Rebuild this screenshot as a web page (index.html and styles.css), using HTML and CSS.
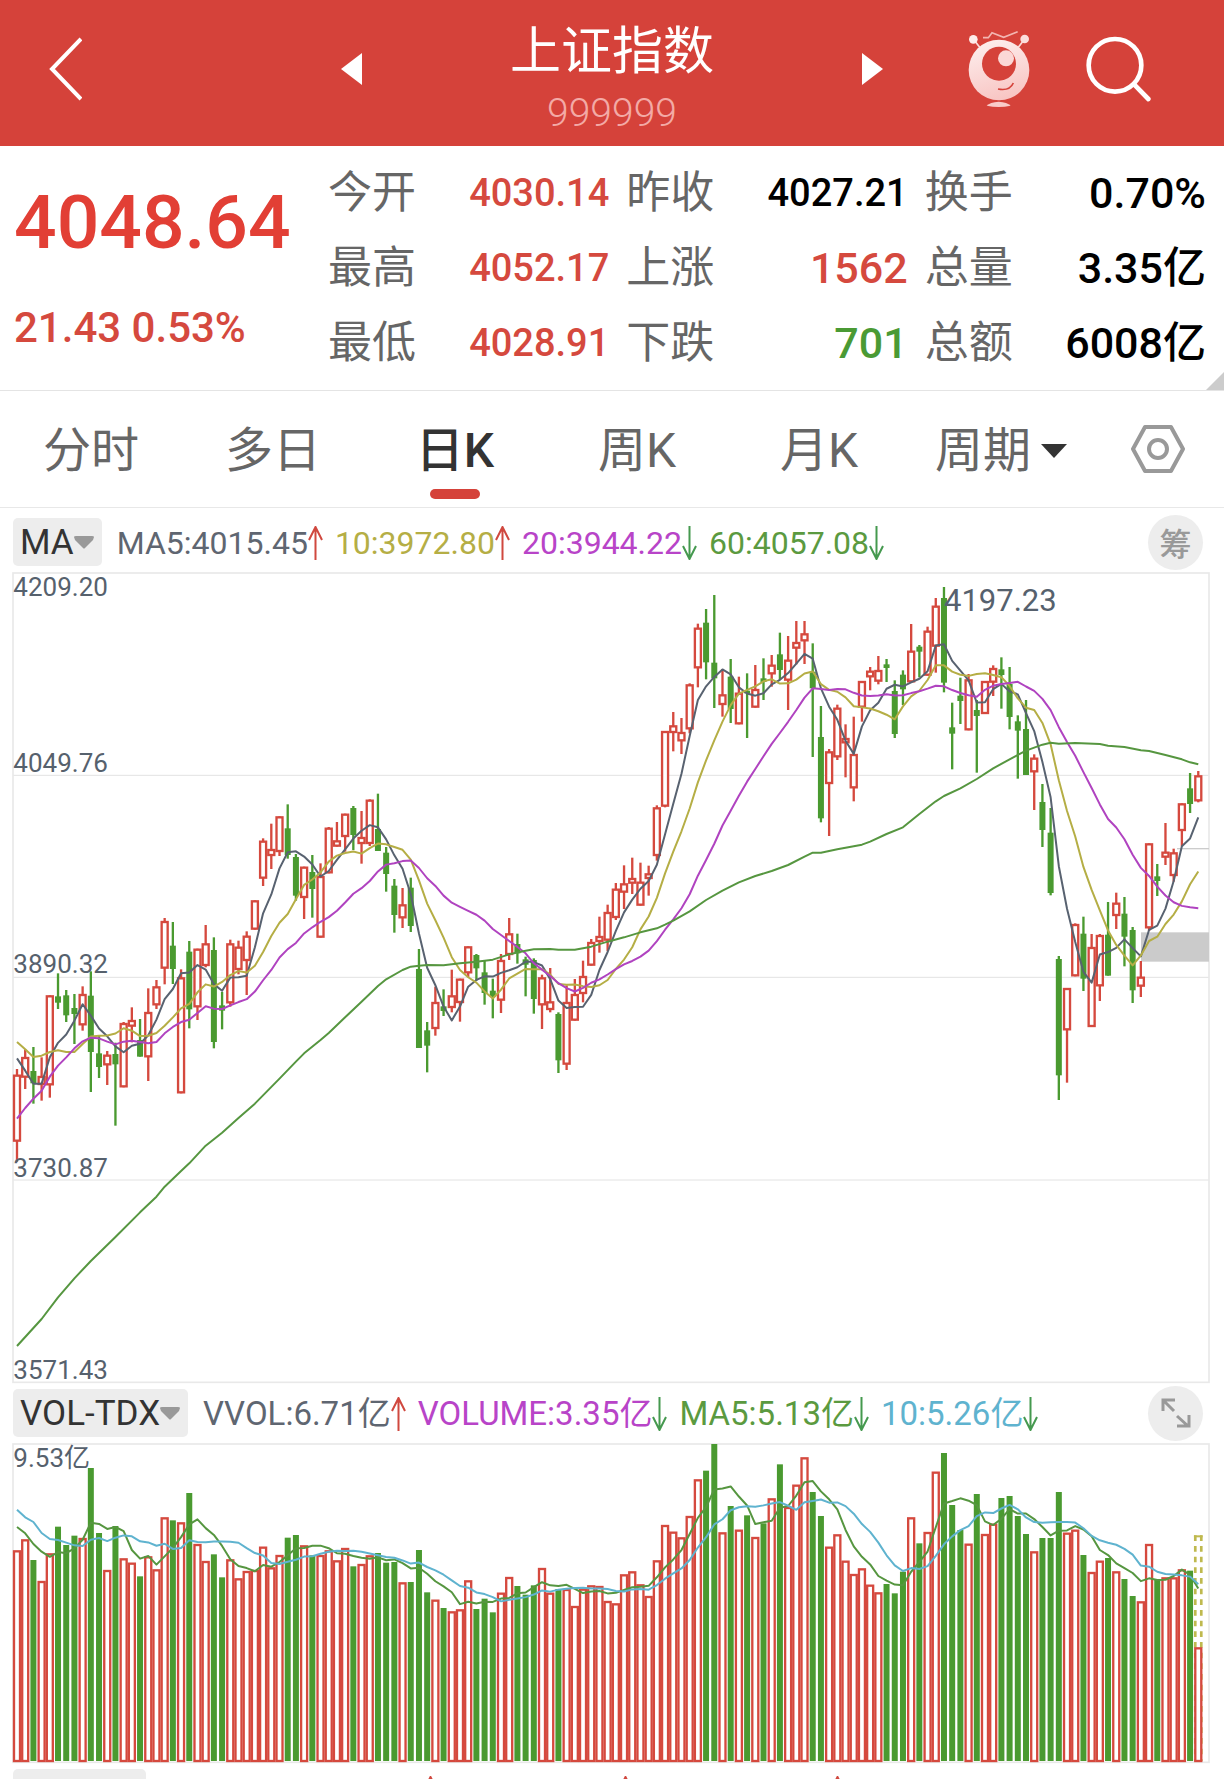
FILE: index.html
```html
<!DOCTYPE html>
<html lang="zh-CN">
<head>
	<meta charset="UTF-8">
	<meta name="viewport" content="width=device-width,initial-scale=1.0">
	<title>上证指数</title>
	<link rel="stylesheet" href="styles.css">
</head>
<body>

	<header class="header">
		<button class="icon_btn back" aria-label="返回">
			<svg width="34" height="64" viewBox="0 0 34 64"><path d="M33 2L4 32L33 62" fill="none" stroke="#fff" stroke-width="4"/></svg>
		</button>
		<div class="switcher">
			<button class="icon_btn" aria-label="上一个">
				<svg width="21" height="32" viewBox="0 0 21 32"><path d="M0 16L21 0V32z" fill="#fff"/></svg>
			</button>
			<div class="title_box">
				<h1 class="title">上证指数</h1>
				<p class="code">999999</p>
			</div>
			<button class="icon_btn" aria-label="下一个">
				<svg width="21" height="32" viewBox="0 0 21 32"><path d="M21 16L0 0V32z" fill="#fff"/></svg>
			</button>
		</div>
		<div class="header_right">
			<button class="icon_btn" aria-label="助手">
				<svg width="62" height="78" viewBox="84 60 186 234">
					<defs>
						<linearGradient id="robot" x1="0.3" y1="0" x2="0.6" y2="1">
							<stop offset="0" stop-color="#fdeeed"/>
							<stop offset="1" stop-color="#f8c4c2"/>
						</linearGradient>
					</defs>
					<path d="M104 92L119 112M250 92L235 112" stroke="#fbdcda" stroke-width="5"/>
					<circle cx="100" cy="88" r="13" fill="#fdecea"/>
					<circle cx="254" cy="87" r="13" fill="#fbdedc"/>
					<path d="M129 83H145L156 68L191 82L233 65" fill="none" stroke="#f3b5b1" stroke-width="5"/>
					<circle cx="177" cy="180" r="91" fill="url(#robot)"/>
					<circle cx="177" cy="161" r="51" fill="#d5423a"/>
					<circle cx="198" cy="145" r="24" fill="#fbd8d6"/>
					<path d="M174 237Q209 244 220 219" fill="none" stroke="#d5423a" stroke-width="5"/>
					<path d="M140 287Q150 276 176 275Q202 276 212 287Q176 295 140 287z" fill="#f9cbc9"/>
				</svg>
			</button>
			<button class="icon_btn" aria-label="搜索">
				<svg width="66" height="66" viewBox="440 78 198 198" fill="none" stroke="#fff" stroke-linecap="round">
					<circle cx="527" cy="166" r="79" stroke-width="14"/>
					<path d="M585 224L627 267" stroke-width="14"/>
				</svg>
			</button>
		</div>
	</header>

	<section class="quote">
		<div class="quote_main">
			<p class="price">4048.64</p>
			<p class="change">21.43 0.53%</p>
		</div>
		<dl class="quote_list">
			<div class="cell"><dt>今开</dt><dd class="num red">4030.14</dd></div>
			<div class="cell"><dt>昨收</dt><dd class="num">4027.21</dd></div>
			<div class="cell"><dt>换手</dt><dd>0.70%</dd></div>
			<div class="cell"><dt>最高</dt><dd class="num red">4052.17</dd></div>
			<div class="cell"><dt>上涨</dt><dd class="red">1562</dd></div>
			<div class="cell"><dt>总量</dt><dd>3.35亿</dd></div>
			<div class="cell"><dt>最低</dt><dd class="num red">4028.91</dd></div>
			<div class="cell"><dt>下跌</dt><dd class="green">701</dd></div>
			<div class="cell"><dt>总额</dt><dd>6008亿</dd></div>
		</dl>
		<span class="corner"></span>
	</section>

	<nav class="tabs">
		<button class="tab">分时</button>
		<button class="tab">多日</button>
		<button class="tab active">日K</button>
		<button class="tab">周K</button>
		<button class="tab">月K</button>
		<button class="tab">周期<svg width="26" height="14" viewBox="0 0 26 14"><path d="M0 0H26L13 14z" fill="#333"/></svg></button>
		<button class="tab tab_icon" aria-label="设置">
			<svg width="54" height="50" viewBox="0 0 54 50" fill="none" stroke="#999" stroke-width="4" stroke-linejoin="round">
				<path d="M14 3H40L52 25L40 47H14L2 25z"/>
				<circle cx="27" cy="25" r="9"/>
			</svg>
		</button>
	</nav>

	<div class="bar bar_ma">
		<button class="pick">MA<svg width="20" height="13" viewBox="0 0 20 13"><path d="M0 1Q0 0 2 0H18Q20 0 20 1L19 4L11 12Q10 13 9 12L1 4z" fill="#999"/></svg></button>
		<ul class="values">
			<li class="c_dark">MA5:4015.45<svg class="arrow"><use href="#up"/></svg></li>
			<li class="c_yellow">10:3972.80<svg class="arrow"><use href="#up"/></svg></li>
			<li class="c_purple">20:3944.22<svg class="arrow"><use href="#down"/></svg></li>
			<li class="c_green">60:4057.08<svg class="arrow"><use href="#down"/></svg></li>
		</ul>
		<button class="round">筹</button>
	</div>

	<svg class="chart" id="kline" viewBox="0 6 3594 2433" role="img" aria-label="日K线"></svg>

	<div class="bar bar_vol">
		<button class="pick">VOL-TDX<svg width="20" height="13" viewBox="0 0 20 13"><path d="M0 1Q0 0 2 0H18Q20 0 20 1L19 4L11 12Q10 13 9 12L1 4z" fill="#999"/></svg></button>
		<ul class="values">
			<li class="c_dark">VVOL:6.71亿<svg class="arrow"><use href="#up"/></svg></li>
			<li class="c_purple">VOLUME:3.35亿<svg class="arrow"><use href="#down"/></svg></li>
			<li class="c_green">MA5:5.13亿<svg class="arrow"><use href="#down"/></svg></li>
			<li class="c_blue">10:5.26亿<svg class="arrow"><use href="#down"/></svg></li>
		</ul>
		<button class="round" aria-label="全屏">
			<svg width="30" height="30" viewBox="0 0 30 30" fill="none" stroke="#999" stroke-width="3"><path d="M2 13V2H14M2 2L13 13M16 18L27 28M28 17V28H16"/></svg>
		</button>
	</div>

	<svg class="chart" id="volume" viewBox="0 219 3594 960" role="img" aria-label="成交量"></svg>

	<div class="bar_next">
		<button class="pick" aria-label="指标"></button>
		<svg class="arrow"><use href="#up"/></svg>
		<svg class="arrow"><use href="#up"/></svg>
		<svg class="arrow"><use href="#up"/></svg>
	</div>

	<svg class="symbols">
		<symbol id="up" viewBox="0 0 15 34"><path d="M7.500 1V34M1 14L7.500 1L14 14" fill="none" stroke="#d0483f" stroke-width="2"/></symbol>
		<symbol id="down" viewBox="0 0 15 34"><path d="M7.500 0V33M1 20L7.500 33L14 20" fill="none" stroke="#45994f" stroke-width="2"/></symbol>
	</svg>

	<script src="chart.js"></script>
</body>
</html>
```

FILE: styles.css
```css
* {
	box-sizing: border-box;
}
body {
	margin: 0;
	background: #fff;
	color: #000;
	font-family: Roboto, "Noto Sans CJK SC", sans-serif;
}
h1, p, ul, dl, dd {
	margin: 0;
	padding: 0;
}
button {
	margin: 0;
	padding: 0;
	border: 0;
	background: none;
	font: inherit;
	color: inherit;
}
svg {
	display: block;
	flex: none;
}
.symbols {
	display: none;
}
.red {
	color: #d5493e;
}
.green {
	color: #4a9a34;
}

/* 顶部 */
.header {
	display: grid;
	grid-template-columns: 1fr 542px 1fr;
	height: 146px;
	padding-top: 19px;
	background: #d5423a;
	color: #fff;
}
.icon_btn {
	display: flex;
	align-items: center;
	height: 100px;
}
.back {
	padding-left: 48px;
}
.switcher {
	display: flex;
	justify-content: space-between;
}
.title_box {
	text-align: center;
}
.title {
	font-size: 51px;
	font-weight: 400;
	line-height: 66px;
}
.code {
	color: #f3aaa6;
	font-size: 39px;
	font-weight: 300;
	line-height: 56px;
}
.header_right {
	display: flex;
	justify-content: flex-end;
	gap: 56px;
	padding-right: 72px;
}

/* 行情 */
.quote {
	position: relative;
	display: flex;
	padding: 10px 18px 9px 14px;
	border-bottom: 1px solid #e4e4e4;
}
.quote_main {
	flex: none;
	width: 314px;
	padding-top: 28px;
	color: #d5493e;
}
.price {
	color: #e23f35;
	font-size: 75px;
	font-weight: 500;
	line-height: 76px;
}
.change {
	margin-top: 47px;
	font-size: 42px;
	line-height: 42px;
}
.quote_list {
	flex: 1;
	display: grid;
	grid-template-columns: repeat(3, 1fr);
	column-gap: 17px;
}
.cell {
	display: flex;
	justify-content: space-between;
	font-size: 44px;
	line-height: 75px;
}
.cell dt {
	color: #666;
}
.cell dd {
	font-size: 43px;
}
.cell .num {
	font-size: 38px;
}
.cell dd, .change {
	font-weight: 500;
}
.corner {
	position: absolute;
	right: 0;
	bottom: 0;
	border-left: 18px solid transparent;
	border-bottom: 18px solid #ccc;
}

/* 周期切换 */
.tabs {
	display: grid;
	grid-template-columns: repeat(6, 1fr) 132px;
	height: 117px;
	border-bottom: 1px solid #e8e8e8;
}
.tab {
	position: relative;
	display: flex;
	align-items: center;
	justify-content: center;
	gap: 10px;
	padding-top: 3px;
	color: #666;
	font-size: 48px;
	line-height: 112px;
}
.tab_icon {
	padding-top: 0;
}
.tab.active {
	color: #333;
	font-weight: 500;
}
.tab.active::after {
	content: "";
	position: absolute;
	bottom: 8px;
	width: 50px;
	height: 10px;
	border-radius: 5px;
	background: #d5423a;
}

/* 指标栏 */
.bar {
	display: flex;
	align-items: center;
	padding: 0 21px 0 13px;
	font-size: 33px;
}
.bar_ma {
	height: 64px;
	padding-top: 4px;
	font-size: 32px;
}
.bar_vol {
	height: 60px;
}
.pick {
	display: flex;
	align-items: center;
	height: 48px;
	padding: 0 8px 0 7px;
	border-radius: 5px;
	background: #ededed;
	color: #333;
	font-size: 35px;
}
.values {
	flex: 1;
	display: flex;
	gap: 12px;
	margin-left: 15px;
	list-style: none;
}
.values li {
	display: flex;
	align-items: center;
	padding-top: 2px;
	line-height: 48px;
	white-space: nowrap;
}
.arrow {
	width: 15px;
	height: 34px;
}
.round {
	display: flex;
	align-items: center;
	justify-content: center;
	width: 55px;
	height: 55px;
	border-radius: 50%;
	background: #ededed;
	color: #999;
	font-size: 32px;
	font-weight: 500;
}
.c_dark {
	color: #5f6671;
}
.c_yellow {
	color: #b5ae45;
}
.c_purple {
	color: #b844c8;
}
.c_green {
	color: #5b9a40;
}
.c_blue {
	color: #5fb3cf;
}
.bar_next {
	display: grid;
	grid-template-columns: 133px 292px 195px 212px;
	justify-items: end;
	height: 16px;
	padding: 6px 13px 0;
	overflow: hidden;
}
.bar_next .pick {
	width: 100%;
}
.bar_next .arrow {
	margin-top: 7px;
}

/* 图表 */
.chart {
	width: calc(100% - 26px);
	height: auto;
	margin: 0 14px 0 12px;
	overflow: visible;
}
.frame {
	fill: none;
	stroke: #e9e9e9;
	stroke-width: 5;
}
.grid {
	stroke: #e2e2e2;
	stroke-width: 3;
}
.last {
	stroke: #ccc;
	stroke-width: 4;
}
.gap {
	fill: #cbcbcb;
}
.up {
	fill: #fff;
	stroke: #d5493e;
	stroke-width: 7;
}
.down {
	fill: #4a9a30;
}
.wick {
	stroke-width: 7;
}
.wick_up {
	stroke: #d5493e;
}
.wick_down {
	stroke: #4a9a30;
}
.line {
	fill: none;
	stroke-width: 6;
	stroke-linejoin: round;
}
.l_dark {
	stroke: #586270;
}
.l_yellow {
	stroke: #b5ae45;
}
.l_purple {
	stroke: #b043c0;
}
.l_green {
	stroke: #569640;
}
.l_blue {
	stroke: #5fb3cf;
}
.guess {
	fill: none;
	stroke: #bfb94e;
	stroke-width: 8;
	stroke-dasharray: 17 15;
}
.guess_top {
	stroke: #bfb94e;
	stroke-width: 6;
}
.axis {
	fill: #56616d;
	font-size: 78px;
}
.peak {
	fill: #56616d;
	font-size: 93px;
}
```

FILE: chart.js
```javascript
// [涨跌, 最高, 实体上沿, 实体下沿, 最低]
var candles = [
	[1,1497,1514,1715,1775],[1,1438,1461,1523,1557],[0,1431,1503,1540,1601],[1,1462,1518,1545,1592],[1,1276,1276,1546,1583],
	[0,1210,1279,1298,1317],[0,1260,1276,1336,1356],[0,1272,1314,1332,1422],[1,1249,1272,1366,1382],[0,1204,1277,1446,1566],
	[0,1398,1450,1491,1524],[1,1443,1454,1486,1545],[0,1418,1452,1483,1667],[1,1356,1359,1552,1552],[1,1312,1350,1370,1417],
	[0,1347,1410,1460,1460],[1,1255,1326,1462,1533],[1,1230,1249,1306,1317],[1,1044,1053,1196,1243],[0,1056,1127,1197,1242],
	[1,1198,1222,1570,1570],[0,1113,1145,1318,1375],[1,1136,1136,1312,1350],[1,1065,1120,1188,1192],[0,1102,1140,1416,1435],
	[0,1266,1306,1322,1378],[1,1109,1120,1300,1310],[1,1112,1130,1200,1213],[1,1084,1097,1173,1275],[1,991,991,1079,1079],
	[1,805,812,926,948],[1,761,837,858,897],[1,739,739,846,858],[0,703,775,855,866],[0,852,861,977,992],
	[1,890,890,984,1047],[0,855,906,957,1043],[1,880,918,1103,1103],[1,771,773,910,910],[1,756,811,830,830],
	[1,731,731,801,845],[0,708,714,795,840],[1,723,801,822,881],[1,688,689,822,828],[0,671,777,843,843],
	[0,831,848,912,965],[0,927,947,1035,1088],[1,954,1003,1045,1074],[0,923,953,1068,1086],[0,1137,1197,1434,1434],
	[0,1356,1381,1427,1507],[1,1250,1296,1377,1397],[0,1258,1309,1323,1338],[1,1199,1276,1314,1327],[1,1226,1226,1299,1355],
	[1,1129,1129,1210,1221],[0,1152,1155,1195,1232],[0,1173,1207,1269,1304],[0,1226,1262,1280,1345],[1,1152,1170,1292,1329],
	[1,1044,1090,1155,1170],[0,1091,1122,1150,1181],[0,1160,1168,1184,1279],[0,1165,1170,1287,1331],[1,1214,1222,1306,1377],
	[1,1194,1294,1320,1327],[0,1327,1332,1471,1509],[1,1246,1296,1484,1500],[1,1227,1272,1352,1352],[1,1172,1218,1272,1297],
	[1,1107,1116,1187,1187],[1,1040,1098,1116,1148],[1,1004,1026,1112,1143],[1,939,956,1044,1050],[1,886,940,968,1017],
	[1,863,924,941,972],[1,878,935,1007,1007],[1,887,910,927,977],[1,706,712,858,872],[1,483,483,710,712],
	[1,426,466,489,544],[1,444,486,514,552],[1,340,343,478,490],[1,161,173,295,352],[0,117,158,277,328],
	[0,75,278,325,414],[1,297,373,405,440],[0,267,320,417,459],[1,320,368,463,463],[0,310,362,370,504],
	[1,285,357,413,413],[0,265,325,336,390],[1,255,284,313,350],[0,188,253,300,330],[1,198,269,332,420],
	[1,153,216,236,283],[1,153,190,214,282],[0,220,305,355,561],[0,408,501,745,757],[1,537,544,642,798],
	[1,404,413,562,570],[1,463,504,520,622],[1,440,552,655,694],[1,333,333,413,455],[1,291,302,322,361],
	[1,258,300,335,343],[0,267,283,294,336],[0,331,363,492,504],[0,301,314,358,405],[1,162,242,337,337],
	[0,225,230,245,322],[1,170,182,317,317],[1,84,107,230,308],[0,51,84,338,367],[0,398,472,491,598],
	[0,323,377,393,462],[1,312,328,481,481],[0,390,420,438,608],[1,333,333,432,432],[1,286,294,338,378],
	[0,262,298,315,416],[0,291,342,441,478],[0,436,454,482,626],[0,390,477,615,615],[1,553,563,607,720],
	[0,642,696,780,831],[0,714,788,969,976],[0,1158,1167,1516,1590],[1,1254,1254,1381,1538],[1,1060,1062,1219,1219],
	[0,1040,1091,1226,1263],[1,1092,1131,1371,1371],[1,1092,1095,1249,1293],[0,996,1094,1217,1217],[1,968,998,1038,1077],
	[0,981,1031,1100,1189],[0,1071,1080,1261,1299],[1,1173,1220,1250,1281],[1,820,820,1075,1083],[0,882,919,933,978],
	[1,759,845,863,885],[1,836,847,918,935],[1,700,700,783,829],[0,609,655,702,729],[1,603,616,694,697]
]

// 成交量柱顶
var volumes = [
	541,508,570,633,550,470,525,497,504,294,489,600,468,565,578,619,559,598,442,451,
	457,369,522,573,553,622,568,625,603,600,530,592,555,503,495,526,556,555,541,571,
	534,589,582,556,549,578,576,637,636,540,667,689,714,724,718,631,717,686,727,668,
	621,648,674,646,594,668,657,657,708,656,646,648,693,700,613,604,643,678,571,465,
	485,502,438,328,302,222,487,408,479,436,501,460,385,283,411,344,262,366,438,530,
	493,572,612,595,644,667,642,670,605,442,520,486,305,249,405,480,521,372,492,461,
	384,378,438,492,544,504,504,366,488,479,555,606,572,564,604,627,678,694,522,630,
	622,622,598,602,832
]

// 均线在第一根K线之前的部分
var ma5Lead = [1465,1502,1541,1541]
var ma10Lead = [1416,1438,1461,1457,1446,1441,1446,1446,1422]
var ma20Lead = [1646,1614,1586,1562,1520,1487,1462,1435,1414,1403,1405,1415,1423,1415,1412,1416,1420,1416,1390]
var vol5Lead = [471,490,522,545]
var vol10Lead = [419,442,456,489,507,510,518,526,528]

// 60日线 [序号, y]
var ma60 = [
	[0,2328],[3,2247],[5,2182],[7,2125],[9,2073],[12,2001],[15,1927],[17,1880],[18,1850],[20,1803],[21,1780],[23,1727],
	[25,1688],[27,1644],[29,1601],[32,1526],[34,1475],[35,1450],[37,1410],[38,1389],[40,1342],[42,1295],[44,1248],[45,1228],
	[47,1200],[48,1190],[49,1187],[50,1185],[52,1186],[54,1180],[56,1175],[58,1169],[60,1153],[62,1142],[63,1138],[65,1137],
	[66,1139],[68,1139],[70,1130],[72,1115],[74,1102],[76,1087],[78,1075],[79,1064],[80,1052],[82,1024],[84,990],[86,962],
	[88,937],[90,918],[92,903],[94,885],[96,860],[97,848],[98,848],[100,838],[102,829],[103,824],[104,815],[106,792],
	[108,772],[110,732],[112,694],[113,678],[115,655],[117,627],[119,595],[121,568],[123,542],[125,524],[126,518],[127,521],
	[129,519],[132,522],[133,527],[135,531],[137,541],[138,543],[140,555],[142,568],[143,577],[144,583]
]

var kline = document.getElementById("kline")
var volume = document.getElementById("volume")

function getX(i) {
	return 15 + i * 24.61
}

function add(parent, name, cls, attrs, text) {
	var el = document.createElementNS("http://www.w3.org/2000/svg", name)
	el.setAttribute("class", cls)
	for (var key in attrs) {
		el.setAttribute(key, attrs[key])
	}
	if (text) el.textContent = text
	parent.appendChild(el)
}

function drawBody(parent, x, isUp, top, bottom) {
	if (isUp) {
		add(parent, "rect", "up", {x: x - 9, y: top + 3, width: 18, height: Math.max(bottom - top - 6, 1)})
	} else {
		add(parent, "rect", "down", {x: x - 9, y: top, width: 18, height: bottom - top})
	}
}

function drawLine(parent, cls, points) {
	var str = points.map(function (p) {
		return getX(p[0]) + "," + p[1]
	}).join(" ")
	add(parent, "polyline", "line " + cls, {points: str})
}

function average(values, n, lead) {
	return values.map(function (v, i) {
		if (i < n - 1) return [i, lead[i]]
		var sum = 0
		for (var j = i - n + 1; j <= i; j++) sum += values[j]
		return [i, sum / n]
	})
}

function drawKline() {
	var rows = [616, 1222, 1830]
	rows.forEach(function (y) {
		add(kline, "line", "grid", {x1: 3, x2: 3591, y1: y, y2: y})
	})
	add(kline, "rect", "frame", {x: 3, y: 9, width: 3588, height: 2428})
	add(kline, "rect", "gap", {x: 3387, y: 1087, width: 204, height: 88})
	add(kline, "line", "last", {x1: 3495, x2: 3591, y1: 836, y2: 836})

	candles.forEach(function (c, i) {
		var x = getX(i)
		add(kline, "line", "wick " + (c[0] ? "wick_up" : "wick_down"), {x1: x, x2: x, y1: c[1], y2: c[4]})
		drawBody(kline, x, c[0], c[2], c[3])
	})

	var closes = candles.map(function (c) {
		return c[0] ? c[2] : c[3]
	})
	drawLine(kline, "l_dark", average(closes, 5, ma5Lead))
	drawLine(kline, "l_yellow", average(closes, 10, ma10Lead))
	drawLine(kline, "l_purple", average(closes, 20, ma20Lead))
	drawLine(kline, "l_green", ma60)

	var labels = [["4209.20", 78], ["4049.76", 605], ["3890.32", 1210], ["3730.87", 1820], ["3571.43", 2426]]
	labels.forEach(function (l) {
		add(kline, "text", "axis", {x: 4, y: l[1]}, l[0])
	})
	add(kline, "text", "peak", {x: 2796, y: 124}, "4197.23")
}

function drawVolume() {
	add(volume, "rect", "frame", {x: 3, y: 222, width: 3588, height: 955})
	var x = getX(144)
	add(volume, "path", "guess", {d: "M" + (x - 9) + " 496V1173M" + (x + 9) + " 496V1173"})
	add(volume, "line", "guess_top", {x1: x - 13, x2: x + 13, y1: 499, y2: 499})

	volumes.forEach(function (top, i) {
		drawBody(volume, getX(i), candles[i][0], top, candles[i][0] ? 1176 : 1173)
	})
	drawLine(volume, "l_green", average(volumes, 5, vol5Lead))
	drawLine(volume, "l_blue", average(volumes, 10, vol10Lead))
	add(volume, "text", "axis", {x: 4, y: 290}, "9.53亿")
}

drawKline()
drawVolume()
```
